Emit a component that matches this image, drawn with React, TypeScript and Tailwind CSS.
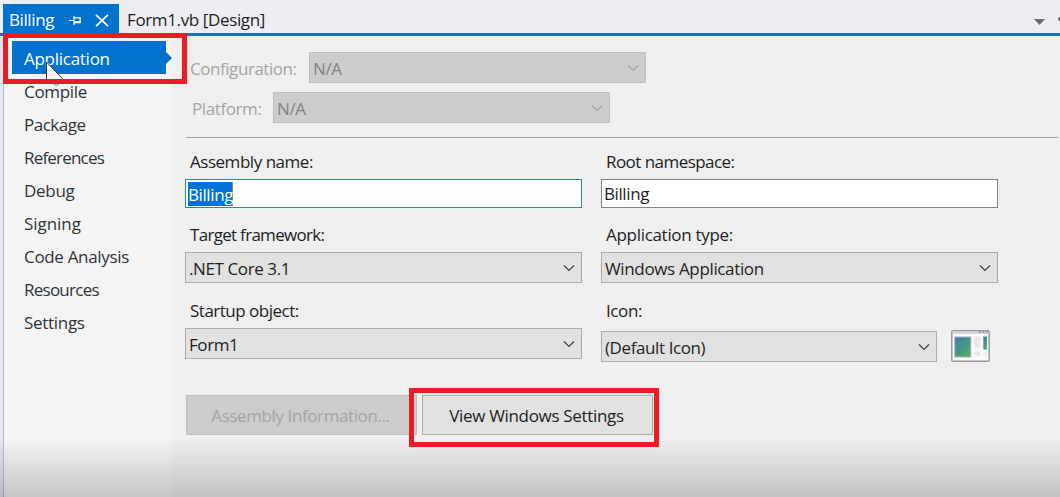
import type { ReactNode } from "react";

const pages: [string, string][] = [
  ["Compile", "tracking-[-0.3px]"],
  ["Package", "tracking-[-0.5px]"],
  ["References", "tracking-[-0.8px]"],
  ["Debug", "tracking-[-0.3px]"],
  ["Signing", "tracking-[-0.05px]"],
  ["Code Analysis", "tracking-[-0.33px]"],
  ["Resources", "tracking-[-0.75px]"],
  ["Settings", "tracking-[-0.3px]"],
];

function Chevron() {
  return (
    <svg className="h-[8px] w-[12px] shrink-0" viewBox="0 0 12 8" fill="none" stroke="currentColor" strokeWidth="1.2">
      <path d="M1 1.5 6 6.5 11 1.5" />
    </svg>
  );
}

function Combo({ className, disabled, children }: { className: string; disabled?: boolean; children: ReactNode }) {
  const tone = disabled
    ? "border-[#bfbfbf] bg-[#cccccc] text-[#838383]"
    : "border-[#acacac] bg-[#e1e1e1] text-[#1e1e1e]";
  const arrow = disabled ? "text-[#a3a3a3]" : "text-[#404040]";
  return (
    <div className={`flex h-[31px] items-center justify-between border pr-[6px] pl-[3px] ${tone} ${className}`}>
      <span className="pt-[2px]">{children}</span>
      <span className={arrow}>
        <Chevron />
      </span>
    </div>
  );
}

function Label({ children, className = "" }: { children: ReactNode; className?: string }) {
  return <div className={`h-[24px] pl-[5px] text-[#1e1e1e] ${className}`}>{children}</div>;
}

function PinIcon() {
  return (
    <svg className="h-[11px] w-[13px]" viewBox="0 0 13 11" fill="none" stroke="white" strokeWidth="1.2">
      <path d="M0 5.5H4.5M5 1V10M5 2.8H11.2V7.6H5" />
      <path d="M5 7H11.5" strokeWidth="1.8" />
    </svg>
  );
}

function CloseIcon() {
  return (
    <svg className="h-[13px] w-[14px]" viewBox="0 0 14 13" fill="none" stroke="white" strokeWidth="1.7">
      <path d="M1 .8 13 12.2M13 .8 1 12.2" />
    </svg>
  );
}

function AppIcon() {
  return (
    <svg className="h-[32px] w-[39px]" viewBox="0 0 39 32">
      <defs>
        <linearGradient id="pane" x1="0" y1="0" x2=".7" y2="1">
          <stop offset="0" stopColor="#3c78a4" />
          <stop offset=".5" stopColor="#41938a" />
          <stop offset="1" stopColor="#52ad68" />
        </linearGradient>
      </defs>
      <rect x=".8" y=".8" width="37.4" height="30.4" rx="1.2" fill="#fbfbfb" stroke="#9699a0" strokeWidth="1.5" />
      <path d="M1.5 1.5H37.5V4H1.5Z" fill="#d5d7dc" />
      <path d="M28 2h2M31.5 2h2M35 2h2" stroke="#62656c" strokeWidth="1.2" />
      <rect x="3.8" y="7" width="16" height="20" fill="url(#pane)" stroke="#a6b4b7" />
      <path d="M4.5 19Q8 11 19 10" fill="none" stroke="#6aa9a8" strokeWidth=".8" opacity=".6" />
      <path d="M23.5 6.5h6v12h-6ZM23.5 20.5h6v6h-6Z" fill="#ececec" />
      <path d="M23.5 9.5h6M23.5 12.5h6M23.5 15.5h6M23.5 23.5h6" stroke="#dadada" strokeWidth=".7" />
      <rect x="32.3" y="6.5" width="3.7" height="13" fill="url(#pane)" />
      <path d="M32 22h4v5h-4z" fill="#efefef" />
    </svg>
  );
}

export default function App() {
  return (
    <div className="relative flex h-[497px] w-[1060px] flex-col overflow-hidden bg-[#efefef] font-['Open_Sans','Noto_Sans',sans-serif] text-[17px] leading-[24px] tracking-[-0.4px] whitespace-nowrap">
      <header className="flex h-[36px] shrink-0 items-end border-b-[3px] border-[#0f72ba] bg-[#eeeef2] pl-[3px] text-[#1e1e1e]">
        <div className="flex h-[29px] w-[116px] items-center bg-[#0173cf] pl-[6px] text-white">
          <span className="w-[60px] pt-[3px]">Billing</span>
          <span className="pt-[4px]">
            <PinIcon />
          </span>
          <span className="ml-[13px] pt-[4px]">
            <CloseIcon />
          </span>
        </div>
        <span className="flex h-[29px] flex-1 items-center pt-[3px] pl-[8px] tracking-[-0.37px]">Form1.vb [Design]</span>
        <svg className="mb-[8px] h-[8px] w-[26px]" viewBox="0 0 26 8" fill="#6b6b70">
          <path d="M0 2H11L5.5 8Z" />
          <circle cx="26" cy="2" r="2" />
        </svg>
      </header>

      <div className="flex min-h-0 flex-1">
        <aside className="flex w-[172px] shrink-0 border-r border-[#f0f0f0] bg-[#f4f4f4]">
          <div className="w-[4px] shrink-0 border-r border-[#b9b9cb] bg-[#e5e5f0]" />
          <nav className="flex-1 pt-[5px] pl-[8px] text-[#30343a]">
            <div className="flex items-center">
              <div className="flex h-[33px] w-[154px] items-center bg-[#0173cf] pt-[2px] pl-[12px] tracking-[-0.27px] text-white">Application</div>
              <svg className="h-[12px] w-[6px]" viewBox="0 0 6 12" fill="#0173cf">
                <path d="M0 0 6 6 0 12Z" />
              </svg>
            </div>
            {pages.map(([name, spacing]) => (
              <div key={name} className={`flex h-[33px] items-center pt-[2px] pl-[12px] ${spacing}`}>
                {name}
              </div>
            ))}
          </nav>
        </aside>

        <main className="flex-1 pt-[16px] pl-[13px]">
          <div className="flex text-[#a5a5a5]">
            <span className="w-[124px] pt-[5px] pl-[5px] tracking-[-0.45px]">Configuration:</span>
            <Combo className="w-[337px]" disabled>N/A</Combo>
          </div>
          <div className="mt-[9px] flex text-[#a5a5a5]">
            <span className="w-[88px] pt-[5px] pl-[7px]">Platform:</span>
            <Combo className="w-[337px]" disabled>N/A</Combo>
          </div>
          <div className="mt-[14px] ml-[1px] h-px w-[872px] bg-[#9d9d9d]" />

          <div className="mt-[12px] flex gap-[19px]">
            <section className="w-[397px]">
              <Label className="tracking-[-0.47px]">Assembly name:</Label>
              <div className="mt-[5px] flex h-[29px] items-center border border-[#3383ae] bg-white pl-[2px] outline outline-[#dff5f8]">
                <span className="h-[24px] w-[45px] border-r border-[#b87949] bg-[#0173d5] pt-px text-white">Billing</span>
              </div>
              <Label className="mt-[15px] tracking-[-0.7px]">Target framework:</Label>
              <Combo className="mt-[5px]">.NET Core 3.1</Combo>
              <Label className="mt-[16px] tracking-[-0.5px]">Startup object:</Label>
              <Combo className="mt-[5px]">Form1</Combo>
            </section>
            <section className="w-[397px]">
              <Label className="tracking-[-0.55px]">Root namespace:</Label>
              <div className="mt-[5px] flex h-[29px] items-center border border-[#828282] bg-white pt-px pl-[2px] text-[#1e1e1e]">Billing</div>
              <Label className="mt-[15px] tracking-[-0.3px]">Application type:</Label>
              <Combo className="mt-[5px] tracking-[-0.35px]">Windows Application</Combo>
              <Label className="mt-[16px]">Icon:</Label>
              <div className="mt-[7px] flex gap-[14px]">
                <Combo className="mt-[1px] w-[336px]">(Default Icon)</Combo>
                <AppIcon />
              </div>
            </section>
          </div>

          <div className="mt-[33px] ml-[1px] flex gap-[5px]">
            <button className="h-[40px] w-[231px] border border-[#bfbfbf] bg-[#cccccc] pt-px pr-[2px] text-[#a5a5a5]">Assembly Information...</button>
            <button className="h-[40px] w-[231px] border border-[#acacac] bg-[#e1e1e1] pt-px pr-[2px] tracking-[-0.32px] text-[#1e1e1e]">View Windows Settings</button>
          </div>
        </main>
      </div>

      <div className="pointer-events-none absolute inset-x-0 bottom-0 h-[59px] bg-linear-to-b from-black/0 to-black/19" />
      <svg className="absolute top-[61px] left-[45px] h-[26px] w-[22px]" viewBox="0 0 22 26">
        <path d="M1.5 1V24L7 18.5H17.5Z" fill="#f7f7f7" />
        <path d="M1.5 20V1L17.5 17.5" fill="none" stroke="#30343c" />
        <path d="M9 23Q11 26 14 23" fill="none" stroke="#777b82" />
      </svg>
      <div className="absolute top-[33px] left-[3px] h-[51px] w-[184px] border-[5px] border-[#ed1c24]" />
      <div className="absolute top-[388px] left-[409px] h-[59px] w-[250px] border-[5px] border-[#ed1c24]" />
    </div>
  );
}
